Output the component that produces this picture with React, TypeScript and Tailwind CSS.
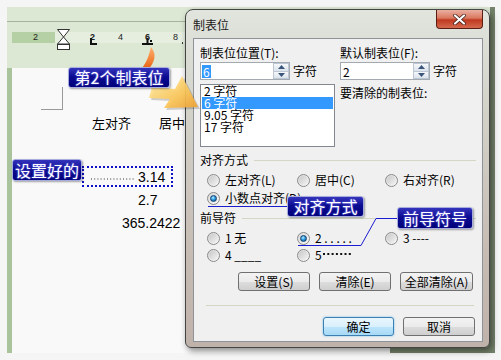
import React from "react";

const Radio = ({ checked = false }: { checked?: boolean }) => (
  <span className="flex h-[13px] w-[13px] shrink-0 items-center justify-center rounded-full border border-[#8a8a8a] bg-[linear-gradient(135deg,#d8d8d8,#fafafa)]">
    {checked ? (
      <span className="h-[7px] w-[7px] rounded-full border border-[#17416a] bg-[radial-gradient(circle_at_40%_35%,#c4f0ff_0%,#2a9ae0_45%,#0a4f8e_100%)]" />
    ) : (
      <span className="h-[9px] w-[9px] rounded-full bg-[linear-gradient(135deg,#c8c8c8,#f4f4f4)]" />
    )}
  </span>
);

const Option = ({ label, checked, w }: { label: string; checked?: boolean; w: string }) => (
  <div className={`flex items-center gap-[5px] ${w}`}>
    <Radio checked={checked} />
    <span className="whitespace-pre">{label}</span>
  </div>
);

const SpinBox = ({ value, selected }: { value: string; selected?: boolean }) => (
  <div className="flex h-[18px] w-[90px] border border-[#a3a9b1] bg-white">
    <div className="flex flex-1 items-center pl-[1px]">
      <span className={selected ? "bg-[#3399ff] px-[1px] leading-[13px] text-white" : "px-[1px] leading-[13px]"}>{value}</span>
    </div>
    <div className="flex w-[16px] flex-col">
      <div className="flex flex-1 items-center justify-center border border-[#bcc7d3] bg-[linear-gradient(#f6f8fb,#dbe3ec)]">
        <svg width="7" height="4" viewBox="0 0 7 4"><path d="M0 4L3.5 0L7 4Z" fill="#3b567a" /></svg>
      </div>
      <div className="flex flex-1 items-center justify-center border border-t-0 border-[#bcc7d3] bg-[linear-gradient(#f6f8fb,#dbe3ec)]">
        <svg width="7" height="4" viewBox="0 0 7 4"><path d="M0 0L3.5 4L7 0Z" fill="#3b567a" /></svg>
      </div>
    </div>
  </div>
);

const Button = ({ label, primary, w }: { label: string; primary?: boolean; w: string }) => (
  <div
    className={
      primary
        ? `flex h-[19px] items-center justify-center rounded-[3px] border border-[#3c7fb1] bg-[linear-gradient(#eaf6fd_0%,#d9f0fc_50%,#bee6fd_50%,#a7d9f5_100%)] shadow-[0_0_2px_#5fb6ea] ${w}`
        : `flex h-[19px] items-center justify-center rounded-[3px] border border-[#707070] bg-[linear-gradient(#f3f3f3_0%,#ebebeb_50%,#dddddd_50%,#cfcfcf_100%)] ${w}`
    }
  >
    {label}
  </div>
);

const Callout = ({ text, cls }: { text: string; cls: string }) => (
  <div
    className={`absolute flex items-center justify-center rounded-[3px] border border-[#a7acdc] bg-[linear-gradient(#3434bc,#0c0c92_45%,#00007a)] text-[16px] leading-[19px] text-white shadow-[1px_1px_2px_rgba(0,0,0,0.35)] [text-shadow:0_0_2px_#8080ff] ${cls}`}
  >
    {text}
  </div>
);

export default function App() {
  return (
    <div className="relative h-[360px] w-[501px] overflow-hidden bg-[#f5f5f5] pl-[7px] pt-[7px] font-['Noto_Sans_CJK_SC',sans-serif] text-[12px] text-black">
      {/* screenshot: word page */}
      <div className="flex h-[346px] w-[488px] flex-col bg-[#76846c]">
        <div className="relative h-[61px] w-[483px] bg-[#dce8d4]">
          <div className="mt-[14px] h-[1px] bg-[#a4b49b]" />
          <div className="ml-[5px] mt-[10px] flex h-[11px]">
            <div className="w-[43px] bg-[#b4d0a4]" />
            <div className="flex-1 bg-[#e6eee0]" />
          </div>
          <div className="absolute left-0 top-[25px] h-[11px] w-full font-['Liberation_Sans',sans-serif] text-[9px] leading-[11px] text-[#222]">
            <span className="absolute left-[26px]">2</span>
            <span className="absolute left-[83px] font-bold">2</span>
            <span className="absolute left-[111px]">4</span>
            <span className="absolute left-[138px] font-bold">6</span>
            <span className="absolute left-[166px]">8</span>
          </div>
          <svg className="absolute left-0 top-0" width="483" height="61" viewBox="0 0 483 61">
            <path d="M50.5 22.5H62.5L56.5 30Z" fill="#fff" stroke="#333" />
            <path d="M56.5 30L62.5 37H50.5Z" fill="#fff" stroke="#333" />
            <rect x="50.5" y="37.5" width="12" height="5" fill="#fff" stroke="#333" />
            <path d="M84 31V37H90" fill="none" stroke="#111" strokeWidth="2" />
            <path d="M135 37H146M140.5 31V37" fill="none" stroke="#111" strokeWidth="2" />
            <rect x="143" y="33" width="2" height="2" fill="#111" />
            <rect x="175" y="35" width="1" height="2" fill="#333" />
          </svg>
        </div>
        <div className="flex flex-1">
          <div className="w-[5px] bg-[#a9c49c]" />
          <div className="w-[378px] bg-[#f9f9f9]">
            <div className="ml-[29px] mt-[19px] h-[23px] w-[22px] border-b border-r border-[#9a9a9a]" />
            <div className="mt-[6px] flex h-[14px] items-center pl-[80px] text-[13px] leading-[14px]">
              <span>左对齐</span>
              <span className="ml-[28px]">居中</span>
            </div>
            <div className="ml-[70px] mt-[36px] flex h-[21px] w-[91px] items-center border-2 border-dotted border-[#1010c8] font-['Liberation_Sans',sans-serif] text-[14px]">
              <svg className="ml-[7px] mt-[5px]" width="43" height="2" viewBox="0 0 43 2">
                <line x1="0" y1="1" x2="43" y2="1" stroke="#333" strokeWidth="1" strokeDasharray="1 2.2" />
              </svg>
              <span className="ml-[4px] leading-[16px]">3.14</span>
            </div>
            <div className="ml-[126px] mt-[5px] h-[17px] font-['Liberation_Sans',sans-serif] text-[14px] leading-[17px]">2.7</div>
            <div className="ml-[110px] mt-[6px] h-[17px] font-['Liberation_Sans',sans-serif] text-[14px] leading-[17px]">365.2422</div>
          </div>
        </div>
      </div>

      {/* dialog */}
      <div className="absolute left-[185px] top-[9px] h-[339px] w-[305px] rounded-b-[6px] rounded-t-[8px] border border-[#454545] bg-[linear-gradient(#e1e5dd_0%,#d3d2c9_30%,#c7bdb5_70%,#bfb2aa_100%)] shadow-[2px_3px_6px_rgba(0,0,0,0.45)]">
        <div className="flex h-[28px] items-center pl-[7px] pt-[1px] text-[12px] text-[#1a1a1a]">制表位</div>
        <div className="absolute right-[6px] top-0 flex h-[19px] w-[47px] items-center justify-center rounded-b-[4px] border border-t-0 border-[#5a1d14] bg-[linear-gradient(#eab0a2_0%,#d9785f_45%,#c0391f_55%,#d46a4e_100%)]">
          <svg width="13" height="11" viewBox="0 0 13 11">
            <path d="M2 1.5L11 9.5M11 1.5L2 9.5" stroke="#3a1a14" strokeWidth="3.6" strokeLinecap="round" />
            <path d="M2 1.5L11 9.5M11 1.5L2 9.5" stroke="#ffffff" strokeWidth="2.2" strokeLinecap="round" />
          </svg>
        </div>
        <div className="ml-[7px] h-[304px] w-[290px] border border-[#8e9399] bg-[#f0f0f0] leading-[14px]">
          <div className="flex pl-[6px] pt-[7px]">
            <div className="w-[140px]">
              <div className="h-[14px]">制表位位置(T):</div>
              <div className="mt-[2px] flex items-center gap-[3px]">
                <SpinBox value="6" selected />
                <span>字符</span>
              </div>
              <div className="mt-[4px] h-[63px] w-[135px] border border-[#828790] bg-white leading-[12px]">
                <div className="h-[12px] pl-[3px]">2 字符</div>
                <div className="mx-[1px] h-[12px] bg-[#3399ff] pl-[2px] text-white">6 字符</div>
                <div className="h-[12px] pl-[3px]">9.05 字符</div>
                <div className="h-[12px] pl-[3px]">17 字符</div>
              </div>
            </div>
            <div>
              <div className="h-[14px]">默认制表位(F):</div>
              <div className="mt-[2px] flex items-center gap-[3px]">
                <SpinBox value="2" />
                <span>字符</span>
              </div>
              <div className="mt-[6px] h-[14px]">要清除的制表位:</div>
            </div>
          </div>

          <div className="mt-[6px] flex h-[14px] items-center pl-[6px] pr-[6px]">
            <span>对齐方式</span>
            <div className="ml-[6px] h-[1px] flex-1 bg-[#d3d7c4]" />
          </div>
          <div className="mt-[6px] flex h-[14px] items-center pl-[13px]">
            <Option label="左对齐(L)" w="w-[90px]" />
            <Option label="居中(C)" w="w-[88px]" />
            <Option label="右对齐(R)" w="w-[88px]" />
          </div>
          <div className="mt-[4px] flex h-[14px] items-center pl-[13px]">
            <Option label="小数点对齐(D)" checked w="w-[120px]" />
          </div>

          <div className="mt-[6px] flex h-[14px] items-center pl-[6px] pr-[6px]">
            <span>前导符</span>
            <div className="ml-[6px] h-[1px] flex-1 bg-[#d3d7c4]" />
          </div>
          <div className="mt-[6px] flex h-[14px] items-center pl-[13px]">
            <Option label="1 无" w="w-[90px]" />
            <Option label="2 . . . . ." checked w="w-[88px]" />
            <Option label="3 ----" w="w-[88px]" />
          </div>
          <div className="mt-[3px] flex h-[14px] items-center pl-[13px]">
            <Option label="4 ____" w="w-[90px]" />
            <div className="flex w-[88px] items-center gap-[5px]">
              <Radio />
              <span className="flex items-center">
                5
                <svg className="mb-[3px] ml-[1px]" width="30" height="2" viewBox="0 0 30 2">
                  <line x1="0" y1="1" x2="30" y2="1" stroke="#111" strokeWidth="2" strokeDasharray="2 2.3" />
                </svg>
              </span>
            </div>
          </div>

          <div className="mt-[10px] flex gap-[9px] pl-[44px]">
            <Button label="设置(S)" w="w-[72px]" />
            <Button label="清除(E)" w="w-[72px]" />
            <Button label="全部清除(A)" w="w-[73px]" />
          </div>
          <div className="ml-[12px] mt-[14px] h-[1px] w-[268px] bg-[#d3d7c4]" />
          <div className="mt-[11px] flex gap-[9px] pl-[129px]">
            <Button label="确定" primary w="w-[71px]" />
            <Button label="取消" w="w-[72px]" />
          </div>
        </div>
      </div>

      {/* overlay drawings */}
      <svg className="pointer-events-none absolute left-0 top-0" width="501" height="360" viewBox="0 0 501 360">
        <defs>
          <linearGradient id="sw" x1="0" y1="0" x2="0" y2="1">
            <stop offset="0" stopColor="#ffb070" />
            <stop offset="1" stopColor="#e8600c" />
          </linearGradient>
          <linearGradient id="ar" x1="0" y1="0" x2="1" y2="1">
            <stop offset="0" stopColor="#fff0b0" />
            <stop offset="0.6" stopColor="#fcc85a" />
            <stop offset="1" stopColor="#f0a030" />
          </linearGradient>
        </defs>
        <path d="M151 47C157 54 155 62 148 70L142 68C147 62 149 55 151 47Z" fill="url(#sw)" />
        <path d="M152 87L175 89L182 76L198 107L164 108L170 99L149 98Z" fill="#000" opacity="0.18" transform="translate(2 2)" />
        <path d="M152 87L175 89L182 76L198 107L164 108L170 99L149 98Z" fill="url(#ar)" opacity="0.92" />
        <path d="M208 206.5H290" stroke="#1c1cd0" strokeWidth="1" />
        <path d="M397 218.5H376L361 245.5H298" fill="none" stroke="#1c1cd0" strokeWidth="1" />
      </svg>

      <Callout text="第2个制表位" cls="left-[68px] top-[67px] h-[21px] w-[102px]" />
      <Callout text="设置好的" cls="left-[12px] top-[159px] h-[22px] w-[70px]" />
      <Callout text="对齐方式" cls="left-[287px] top-[196px] h-[21px] w-[77px]" />
      <Callout text="前导符号" cls="left-[397px] top-[207px] h-[22px] w-[76px]" />
    </div>
  );
}
